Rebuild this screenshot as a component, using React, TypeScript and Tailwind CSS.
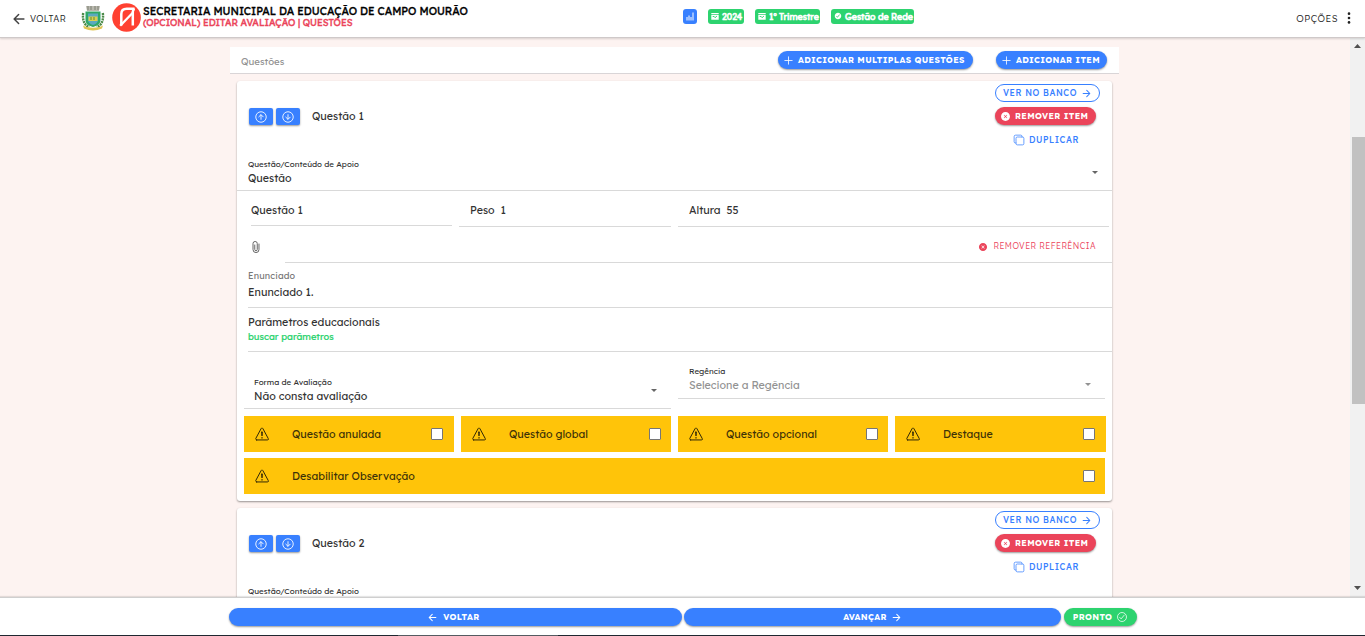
import type { ReactNode } from "react"
import {
  IoAddOutline,
  IoArrowBackOutline,
  IoArrowDownCircleOutline,
  IoArrowForwardOutline,
  IoArrowUpCircleOutline,
  IoAttachOutline,
  IoCheckmarkCircle,
  IoCheckmarkCircleOutline,
  IoCloseCircle,
  IoCopyOutline,
  IoEllipsisVertical,
  IoWarningOutline,
} from "react-icons/io5"

function CityCrest() {
  return (
    <svg viewBox="0 0 24 26" className="h-[26px] w-6">
      <path d="M5 1h14l-1 5H6z" fill="#b9b8ae" />
      <path d="M7 1v4M10 1v4M14 1v4M17 1v4" stroke="#7d8074" strokeWidth="1" />
      <path d="M2.200 8c-1 7 1 12 6 14M21.800 8c1 7-1 12-6 14" fill="none" stroke="#4d8a48" strokeWidth="2.400" strokeDasharray="2 .7" />
      <path d="M4.500 6.500h15V15c0 4-3.500 6-7.500 7-4-1-7.500-3-7.500-7z" fill="#2fa866" />
      <path d="M7 8.500h10V15c0 2.500-2 4-5 5-3-1-5-2.500-5-5z" fill="#5aa9c0" />
      <path d="M7.500 11.500h9v4.500h-9z" fill="#d9cf4e" />
      <path d="M10 12v3M13 12v3" stroke="#5d8c35" />
      <path d="M2 20.500c5 3 15 3 20 0l-1 3c-6 2.500-12 2.500-18 0z" fill="#e0c552" />
    </svg>
  )
}

function BrandLogo() {
  return (
    <svg viewBox="0 0 29 29" className="size-[29px]">
      <circle cx="14.500" cy="14.500" r="14.300" fill="#ff4131" />
      <path d="M9.300 22.500V11c0-3.700 2.400-5.200 5.500-5.200h7.700c-1.200.6-1.700 1.400-1.700 3v13.700" fill="none" stroke="#fff" strokeWidth="2.500" />
      <path d="M8.200 22.800 21 9.500" stroke="#fff" strokeWidth="2.300" />
    </svg>
  )
}

function CalendarIcon() {
  return (
    <svg viewBox="0 0 8 8" className="size-2">
      <path d="M.3 1h7.400v1.300H.3zM.3 3h7.400v4.700H.3z" fill="#fff" />
      <path d="M1.700 4.500h1.500l.8 1.200 2-1.700" fill="none" stroke="#2dd36f" strokeWidth=".9" />
    </svg>
  )
}

function Badge({ icon, className, children }: { icon: ReactNode; className: string; children: ReactNode }) {
  return (
    <div className={`flex h-[15px] items-start gap-[3px] rounded-[3px] bg-[#2dd36f] pl-[3px] text-[8.800px] leading-[16px] font-normal whitespace-nowrap text-white [-webkit-text-stroke:0.6px] ${className}`}>
      <span className="mt-[3px]">{icon}</span>
      {children}
    </div>
  )
}

function Caret({ className }: { className: string }) {
  return (
    <svg viewBox="0 0 6 3" className={`h-[3px] w-1.5 ${className}`}>
      <path d="M0 0h6L3 3z" fill="currentColor" />
    </svg>
  )
}

function MoveButton({ children }: { children: ReactNode }) {
  return (
    <button className="flex h-[17px] w-6 items-center justify-center rounded-[2px] bg-[#3880ff] text-white shadow-[0_1px_2px_rgba(0,0,0,0.4)]">
      {children}
    </button>
  )
}

function CheckItem({ label, className }: { label: string; className: string }) {
  return (
    <div className={`flex h-9 items-center bg-[#ffc409] pl-2.5 text-[#3d3208] ${className}`}>
      <IoWarningOutline className="size-4 stroke-[8] text-[#312806]" />
      <span className="ml-[22px] flex-1">{label}</span>
      <span className="size-3 rounded-[1px] border border-[#767676] bg-white" />
    </div>
  )
}

function QuestionCard({ number }: { number: number }) {
  return (
    <section className="h-[420px] w-[875px] shrink-0 rounded-[3px] bg-white text-[10.700px] font-normal text-[#333] shadow-[0_1px_2px_rgba(0,0,0,0.4)]">
      {/* Title and actions */}
      <div className="flex h-[75px] pl-3">
        <div className="mt-[27px] flex h-[17px] items-center gap-[3px]">
          <MoveButton>
            <IoArrowUpCircleOutline className="size-3.5" />
          </MoveButton>
          <MoveButton>
            <IoArrowDownCircleOutline className="size-3.5" />
          </MoveButton>
          <h2 className="ml-[9px]">Questão {number}</h2>
        </div>
        <div className="mt-[3px] ml-auto w-[117px] text-[8.500px] tracking-[0.6px]">
          <button className="flex h-[18px] w-[105px] items-center justify-center gap-1 rounded-full border border-[#3880ff] font-medium whitespace-nowrap text-[#3880ff]">
            VER NO BANCO
            <IoArrowForwardOutline className="size-[11px]" />
          </button>
          <button className="mt-[5px] flex h-[18px] w-[101px] items-center gap-1 rounded-full bg-[#eb445a] pl-[5px] font-bold tracking-[0.36px] whitespace-nowrap text-white shadow-[0_1px_2px_rgba(0,0,0,0.4)]">
            <IoCloseCircle className="size-[11px]" />
            REMOVER ITEM
          </button>
          <button className="mt-1.5 ml-[18px] flex h-[18px] items-center gap-1 font-medium text-[#3880ff]">
            <IoCopyOutline className="size-3" />
            DUPLICAR
          </button>
        </div>
      </div>

      <div className="flex h-[35px] items-start justify-between border-b border-[#d9d9d9] pr-3.5 pl-[11px]">
        <div className="pt-0.5">
          <p className="text-[8px] leading-[13px]">Questão/Conteúdo de Apoio</p>
          <p className="leading-[15px]">Questão</p>
        </div>
        <Caret className="mt-[15px] text-[#666]" />
      </div>

      {/* Name, weight and height */}
      <div className="flex h-9 items-start gap-[7px] pl-3.5">
        <div className="h-[35px] w-[201px] border-b border-[#d9d9d9] pt-3 leading-[15px]">Questão {number}</div>
        <div className="h-9 w-[212px] border-b border-[#d9d9d9] pt-3 pl-[11px] leading-[15px] whitespace-pre">Peso  1</div>
        <div className="h-9 w-[431px] border-b border-[#d9d9d9] pt-3 pl-[11px] leading-[15px] whitespace-pre">Altura  55</div>
      </div>

      <div className="flex h-9">
        <div className="flex w-12 items-center pt-[3px] pl-[11px]">
          <IoAttachOutline className="size-4 text-[#666]" />
        </div>
        <div className="flex flex-1 items-center justify-end border-b border-[#d9d9d9] pt-1 pr-4">
          <button className="flex items-center gap-[5px] text-[8.300px] font-light tracking-[0.45px] text-[#eb445a]">
            <IoCloseCircle className="size-2.5" />
            REMOVER REFERÊNCIA
          </button>
        </div>
      </div>

      <div className="ml-[11px] h-[45px] border-b border-[#d9d9d9] pt-1.5">
        <p className="text-[9px] leading-[14px] tracking-[0.15px] text-[#777]">Enunciado</p>
        <p className="leading-[18px]">Enunciado {number}.</p>
      </div>
      <div className="ml-[11px] h-11 border-b border-[#d9d9d9] pt-[7px]">
        <p className="leading-[15px]">Parâmetros educacionais</p>
        <p className="text-[9.300px] leading-[13px] text-[#2dd36f] [-webkit-text-stroke:0.2px]">buscar parâmetros</p>
      </div>

      <div className="flex h-[57px] items-start gap-[7px] pl-[7px]">
        <div className="flex h-[57px] w-[427px] items-end justify-between border-b border-[#d9d9d9] pr-3.5 pl-2.5">
          <div className="pb-1">
            <p className="text-[8px] leading-[13px]">Forma de Avaliação</p>
            <p className="leading-[15px]">Não consta avaliação</p>
          </div>
          <Caret className="mb-4 text-[#666]" />
        </div>
        <div className="flex h-[47px] w-[427px] items-end justify-between border-b border-[#d9d9d9] pr-3.5 pl-[11px]">
          <div className="pb-[5px]">
            <p className="text-[8px] leading-[13px]">Regência</p>
            <p className="leading-[15px] text-[#929292]">Selecione a Regência</p>
          </div>
          <Caret className="mb-3 text-[#929292]" />
        </div>
      </div>

      {/* Flags */}
      <div className="mt-[7px] flex gap-[7px] pl-[7px]">
        <CheckItem label="Questão anulada" className="w-[210px] pr-[11px]" />
        <CheckItem label="Questão global" className="w-[210px] pr-2.5" />
        <CheckItem label="Questão opcional" className="w-[210px] pr-2.5" />
        <CheckItem label="Destaque" className="w-[211px] pr-[11px]" />
      </div>
      <CheckItem label="Desabilitar Observação" className="mt-1.5 ml-[7px] w-[861px] pr-2.5" />
    </section>
  )
}

const solidButton =
  "flex h-[18px] items-center rounded-full bg-[#3880ff] text-[8.500px] font-bold tracking-[0.36px] whitespace-nowrap text-white shadow-[0_1px_2px_rgba(0,0,0,0.4)]"

export default function App() {
  return (
    <div className="flex h-[636px] w-[1365px] flex-col overflow-hidden bg-white font-['Lexend','Inter',sans-serif]">
      <header className="relative z-10 flex h-[38px] shrink-0 items-start border-b border-[#cfc9c9] bg-white shadow-[0_1px_2px_rgba(0,0,0,0.15)]">
        <button className="mt-3 ml-[11px] flex h-[14px] w-[70px] items-center gap-[3px] text-[9px] font-light tracking-[0.4px] text-[#222]">
          <IoArrowBackOutline className="size-4 text-[#444]" />
          VOLTAR
        </button>
        <div className="mt-[5px]">
          <CityCrest />
        </div>
        <div className="mt-[3px] ml-[7px]">
          <BrandLogo />
        </div>
        <div className="mt-1 ml-0.5 w-[540px] whitespace-nowrap">
          <h1 className="text-[10.660px] leading-[14px] font-normal text-black [-webkit-text-stroke:0.35px]">
            SECRETARIA MUNICIPAL DA EDUCAÇÃO DE CAMPO MOURÃO
          </h1>
          <p className="text-[9.350px] leading-[9px] font-normal text-[#eb445a] [-webkit-text-stroke:0.4px]">(OPCIONAL) EDITAR AVALIAÇÃO | QUESTÕES</p>
        </div>
        <div className="mt-[9px] flex gap-[11px]">
          <div className="flex h-[15px] w-3.5 items-center justify-center rounded-[3px] bg-[#3880ff]">
            <svg viewBox="0 0 8 9" className="h-[9px] w-2">
              <path d="M1 5v3.500M3 3.500v5M5 5v3.500M7 .5v8" stroke="#fff" />
            </svg>
          </div>
          <Badge icon={<CalendarIcon />} className="w-9">2024</Badge>
          <Badge icon={<CalendarIcon />} className="w-[65px]">1º Trimestre</Badge>
          <Badge icon={<IoCheckmarkCircle className="size-2" />} className="w-[83px]">Gestão de Rede</Badge>
        </div>
        <button className="mt-[11px] mr-[9px] ml-auto flex h-[14px] items-center gap-1 text-[9.500px] font-light tracking-[0.5px] text-[#222]">
          OPÇÕES
          <IoEllipsisVertical className="size-3.5" />
        </button>
      </header>

      <main className="flex min-h-0 flex-1 bg-[#fdf3f1]">
        <div className="flex h-full w-[1350px] flex-col items-start overflow-hidden pt-[9px] pl-[230px]">
          <div className="flex h-[27px] w-[889px] shrink-0 items-center border-b border-[#d9d5d7] bg-white pl-[11px]">
            <span className="mt-[3px] flex-1 text-[9.600px] text-[#929292]">Questões</span>
            <button className={`${solidButton} w-[195px] gap-[3px] pl-1`}>
              <IoAddOutline className="size-[13px]" />
              ADICIONAR MULTIPLAS QUESTÕES
            </button>
            <button className={`${solidButton} mr-3 ml-[23px] w-[111px] gap-[3px] pl-1`}>
              <IoAddOutline className="size-[13px]" />
              ADICIONAR ITEM
            </button>
          </div>
          <div className="mt-[7px] ml-[7px] flex flex-col gap-[7px]">
            <QuestionCard number={1} />
            <QuestionCard number={2} />
          </div>
        </div>
        {/* Scrollbar */}
        <div className="flex w-[15px] flex-col items-center bg-[#f1f1f1] pt-1.5 pb-[7px]">
          <svg viewBox="0 0 7 4" className="h-1 w-[7px]">
            <path d="M0 4h7L3.500 0z" fill="#505050" />
          </svg>
          <div className="mt-[89px] ml-px h-[267px] w-[13px] bg-[#c1c1c1]" />
          <svg viewBox="0 0 7 4" className="mt-auto h-1 w-[7px]">
            <path d="M0 0h7L3.500 4z" fill="#505050" />
          </svg>
        </div>
      </main>

      <footer className="relative z-10 flex h-[39px] shrink-0 flex-col border-t border-[#cfcfcf] bg-white shadow-[0_-1px_1px_rgba(0,0,0,0.1)]">
        <div className="mt-2.5 ml-[229px] flex">
          <button className={`${solidButton} w-[453px] justify-center gap-[5px] pr-1`}>
            <IoArrowBackOutline className="size-[11px]" />
            VOLTAR
          </button>
          <button className={`${solidButton} ml-0.5 w-[377px] justify-center gap-1`}>
            AVANÇAR
            <IoArrowForwardOutline className="size-[11px]" />
          </button>
          <button className="ml-[3px] flex h-[18px] w-[73px] items-center justify-center gap-1 rounded-full bg-[#2dd36f] text-[8.500px] font-bold tracking-[0.36px] text-white shadow-[0_1px_2px_rgba(0,0,0,0.4)]">
            PRONTO
            <IoCheckmarkCircleOutline className="size-3" />
          </button>
        </div>
        <div className="mt-auto flex h-px bg-[#1f2730]">
          <div className="ml-[398px] w-40 bg-[#555b61]" />
        </div>
      </footer>
    </div>
  )
}
